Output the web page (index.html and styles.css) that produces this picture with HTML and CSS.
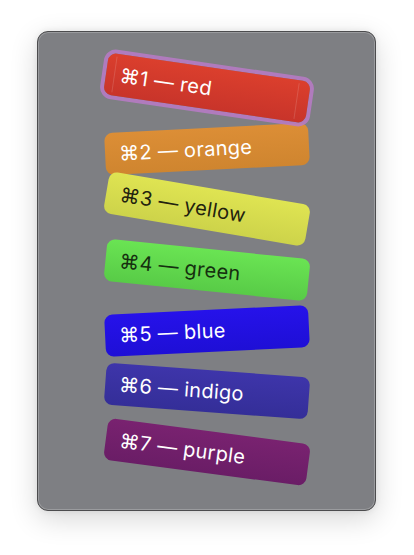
FILE: index.html
```html
<!DOCTYPE html>
<html>
<head>
<meta charset="utf-8">
<link rel="stylesheet" href="styles.css">
</head>
<body>
<div class="window">
  <div class="stack">
    <div class="card red focused">⌘1 — red</div>
    <div class="card orange">⌘2 — orange</div>
    <div class="card yellow">⌘3 — yellow</div>
    <div class="card green">⌘4 — green</div>
    <div class="card blue">⌘5 — blue</div>
    <div class="card indigo">⌘6 — indigo</div>
    <div class="card purple">⌘7 — purple</div>
  </div>
</div>
</body>
</html>
```
FILE: styles.css
```css
html, body {
  margin: 0;
  padding: 0;
  background: #ffffff;
}
body {
  width: 414px;
  height: 555px;
  overflow: hidden;
  font-family: Inter, "Noto Sans", "DejaVu Sans", sans-serif;
}
.window {
  box-sizing: border-box;
  margin: 31px 0 0 37px;
  width: 339px;
  height: 480px;
  border: 1px solid #4c4c4e;
  border-radius: 11px;
  background: #7e7f83;
  box-shadow: inset 0 0 0 1px rgba(255,255,255,0.22), 0 8px 28px rgba(0,0,0,0.16), 0 0 6px rgba(0,0,0,0.08);
}
.stack {
  display: flex;
  flex-direction: column;
  align-items: center;
  gap: 18.7px;
  padding-top: 35px;
}
.card {
  box-sizing: border-box;
  width: 204px;
  height: 42px;
  border-radius: 8px;
  display: flex;
  align-items: center;
  padding-left: 14px;
  font-size: 20px;
  color: #ffffff;
  white-space: nowrap;
  letter-spacing: 0.3px;
}
.focused {
  position: relative;
  z-index: 2;
  box-shadow: 0 0 0 4px rgba(184, 122, 200, 0.85);
}
.focused::before,
.focused::after {
  content: "";
  position: absolute;
  top: 3px;
  bottom: 3px;
  width: 1px;
  background: rgba(255,255,255,0.14);
}
.focused::before { left: 8px; }
.focused::after { right: 11px; }
.red {
  background: linear-gradient(#db3f2d, #c8342a);
  transform: rotate(8.3deg);
}
.orange {
  background: linear-gradient(#dc8e36, #cf852f);
  transform: rotate(-2.9deg);
}
.yellow {
  background: linear-gradient(#dfe452, #cdd34a);
  color: #22220e;
  transform: rotate(9.6deg);
}
.green {
  background: linear-gradient(#6ae453, #58cb47);
  color: #15300f;
  transform: rotate(5.8deg);
}
.blue {
  background: linear-gradient(#2612ea, #1e0fd6);
  transform: rotate(-2.8deg);
}
.indigo {
  background: linear-gradient(#3e35aa, #342e98);
  transform: rotate(4.2deg);
}
.purple {
  background: linear-gradient(#792270, #6a1d66);
  transform: rotate(7.5deg);
}
```
